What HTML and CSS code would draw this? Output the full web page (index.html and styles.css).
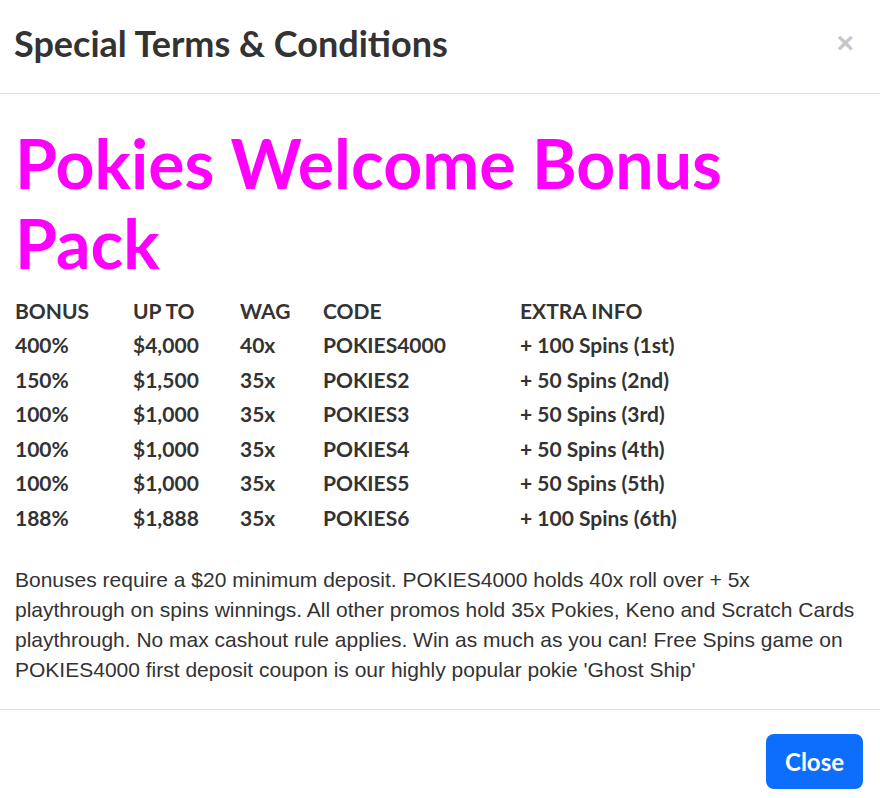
FILE: index.html
```html
<!DOCTYPE html>
<html>
<head>
    <meta charset="utf-8">
    <link rel="stylesheet" href="styles.css">
</head>
<body>
    <div class="modal">
        <div class="modal-header">
            <h2 class="modal-title">Special Terms &amp; Conditions</h2>
            <span class="btn-x">&times;</span>
        </div>

        <div class="modal-body">
            <h1 class="promo-title">Pokies Welcome Bonus Pack</h1>

            <table class="bonus-table">
                <tr><td>BONUS</td><td>UP TO</td><td>WAG</td><td>CODE</td><td>EXTRA INFO</td></tr>
                <tr><td>400%</td><td>$4,000</td><td>40x</td><td>POKIES4000</td><td>+ 100 Spins (1st)</td></tr>
                <tr><td>150%</td><td>$1,500</td><td>35x</td><td>POKIES2</td><td>+ 50 Spins (2nd)</td></tr>
                <tr><td>100%</td><td>$1,000</td><td>35x</td><td>POKIES3</td><td>+ 50 Spins (3rd)</td></tr>
                <tr><td>100%</td><td>$1,000</td><td>35x</td><td>POKIES4</td><td>+ 50 Spins (4th)</td></tr>
                <tr><td>100%</td><td>$1,000</td><td>35x</td><td>POKIES5</td><td>+ 50 Spins (5th)</td></tr>
                <tr><td>188%</td><td>$1,888</td><td>35x</td><td>POKIES6</td><td>+ 100 Spins (6th)</td></tr>
            </table>

            <p class="terms">Bonuses require a $20 minimum deposit. POKIES4000 holds 40x roll over + 5x<br>
            playthrough on spins winnings. All other promos hold 35x Pokies, Keno and Scratch Cards playthrough. No max cashout rule applies. Win as much as you can! Free Spins game on POKIES4000 first deposit coupon is our highly popular pokie 'Ghost Ship'</p>
        </div>

        <div class="modal-footer">
            <button class="btn-close">Close</button>
        </div>
    </div>
</body>
</html>
```

FILE: styles.css
```css
body {
    margin: 0;
    background-color: #FFF;
    color: #333;
    font-family: "Lato", "Noto Sans", sans-serif;
}

.modal {
    width: 880px;
}

.modal-header {
    display: flex;
    align-items: center;
    justify-content: space-between;
    height: 94px;
    padding: 0 26px 8px 14px;
    border-bottom: 1px solid #dee2e6;
    box-sizing: border-box;
}

.modal-title {
    margin: 0;
    font-size: 36px;
    font-weight: 700;
    color: #333;
}

.btn-x {
    font-family: "Liberation Sans", sans-serif;
    font-size: 30px;
    font-weight: 700;
    color: #c8c8c8;
}

.modal-body {
    padding: 29px 16px 0 15px;
}

.promo-title {
    margin: 0 0 10px;
    font-size: 68px;
    line-height: 80px;
    font-weight: 700;
    color: #ff00ff;
}

.bonus-table {
    border-collapse: collapse;
    font-size: 21px;
    font-weight: 700;
    color: #333;
}

.bonus-table td {
    padding: 0;
    height: 34.5px;
    vertical-align: middle;
}

.bonus-table td:nth-child(1) { width: 118px; }
.bonus-table td:nth-child(2) { width: 107px; }
.bonus-table td:nth-child(3) { width: 83px; }
.bonus-table td:nth-child(4) { width: 197px; }

.terms {
    margin: 30px 0 24px;
    font-family: "Liberation Sans", Arial, sans-serif;
    font-size: 21px;
    line-height: 30px;
    color: #333;
}

.modal-footer {
    display: flex;
    justify-content: flex-end;
    padding: 24px 17px 9px;
    border-top: 1px solid #dee2e6;
}

.btn-close {
    font-family: "Lato", sans-serif;
    font-size: 24px;
    font-weight: 700;
    color: #FFF;
    background: #0d6efd;
    border: none;
    border-radius: 8px;
    width: 97px;
    height: 55px;
    cursor: pointer;
}
```
